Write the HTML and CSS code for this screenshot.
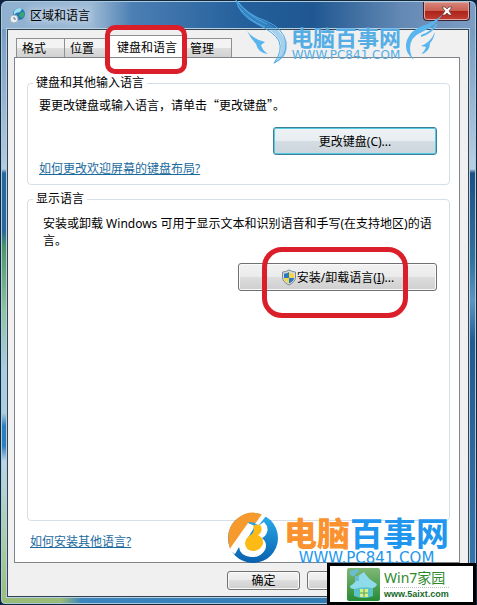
FILE: index.html
```html
<!DOCTYPE html>
<html lang="zh-CN">
<head>
    <meta charset="UTF-8">
    <meta name="viewport" content="width=device-width, initial-scale=1.0">
    <title>区域和语言</title>
    <link rel="stylesheet" href="styles.css">
</head>
<body>
    <div class="window">
        <header class="titlebar">
            <svg class="title-icon" viewBox="0 0 17 17">
                <circle cx="10" cy="7" r="6" fill="#2878b4"/>
                <path d="M7 2q4-2 6 0l-2 3-4 1-2 2q-1-4 2-6z" fill="#9be1ef"/>
                <path d="M11 6l4-1q1 4-2 6l-3-2z" fill="#39a76b"/>
                <circle cx="5" cy="12" r="4" fill="#e9eef2" stroke="#9fb0bd"/>
                <path d="M5 10v2h2" fill="none" stroke="#6c7b88"/>
            </svg>
            <h1>区域和语言</h1>
            <button class="close-btn" type="button" aria-label="关闭">
                <svg viewBox="0 0 12 10" width="12" height="10">
                    <path d="M1 1h3l2 2 2-2h3L8 5l3 4H8L6 7 4 9H1l3-4z" fill="#fff" stroke="#5b3a40" stroke-width=".7"/>
                </svg>
            </button>
        </header>

        <main class="client">
            <div class="tabs" role="tablist">
                <button class="tab" type="button" role="tab">格式</button>
                <button class="tab" type="button" role="tab">位置</button>
                <button class="tab active" type="button" role="tab" aria-selected="true">键盘和语言</button>
                <button class="tab" type="button" role="tab">管理</button>
            </div>

            <div class="panel">
                <fieldset class="group">
                    <legend>键盘和其他输入语言</legend>
                    <p class="hint">要更改键盘或输入语言，请单击“更改键盘”。</p>
                    <button class="btn btn-focus" type="button">更改键盘(C)...</button>
                    <a class="link" href="#">如何更改欢迎屏幕的键盘布局?</a>
                </fieldset>

                <fieldset class="group group-fill">
                    <legend>显示语言</legend>
                    <p class="desc">安装或卸载 Windows 可用于显示文本和识别语音和手写(在支持地区)的语言。</p>
                    <button class="btn btn-wide" type="button">
                        <svg viewBox="0 0 16 17" width="16" height="17">
                            <path d="M8 1q3 2 6.500 2v5q0 5-6.500 8Q1.500 13 1.500 8V3Q5 3 8 1z" fill="#d8dde2" stroke="#7c8994"/>
                            <path d="M8 3v6H3V4.500Q6 4.500 8 3z" fill="#2d78c2"/>
                            <path d="M8 3v6h5V4.500Q10 4.500 8 3z" fill="#f5d64a"/>
                            <path d="M3 9h5v5.500Q3 12 3 9z" fill="#f5d64a"/>
                            <path d="M13 9H8v5.500Q13 12 13 9z" fill="#2d78c2"/>
                        </svg>
                        <span>安装/卸载语言(<u>I</u>)...</span>
                    </button>
                </fieldset>

                <a class="link link-more" href="#">如何安装其他语言?</a>
            </div>

            <footer class="actions">
                <button class="btn btn-small" type="button">确定</button>
                <button class="btn btn-small" type="button" aria-label="取消"></button>
                <button class="btn btn-small" type="button" aria-label="应用"></button>
            </footer>
        </main>
    </div>

    <!-- highlight rings -->
    <div class="ring ring-tab"></div>
    <div class="ring ring-install"></div>

    <!-- site marks -->
    <div class="mark-top">
        <svg viewBox="0 0 54 66" width="54" height="66">
            <path d="M2 0Q6 15 22 23 39 29 46 41q4 12-7 23 17-7 13-22Q47 30 34 23 13 13 2 0z" fill="#4ba9e6" fill-opacity=".45"/>
            <path d="M2 0q11 15 30 21 17 7 20 21 1 15-12 21 9-12 5-22-5-9-22-17Q5 15 2 0M4 6q10 14 27 21M3 1q12 16 30 23" fill="none" stroke="#4ba9e6"/>
            <path d="M13 31q7 9 18 11l-4 3q1 5 7 9-10-1-12-10-5-5-9-13z" fill="#58b5ee"/>
        </svg>
        <div class="mark-text">
            <span class="mark-name">电脑百事网</span>
            <span class="mark-url">WWW.PC841.COM</span>
        </div>
        <svg viewBox="0 0 40 66" width="40" height="66">
            <path d="M39 14Q30 27 18 32 6 37 6 48q0 7 4 12Q-1 52 3 40 7 30 18 26q13-4 21-12z" fill="#58b5ee"/>
            <path d="M33 24q-6 9-16 12" fill="none" stroke="#58b5ee" stroke-width="2"/>
            <path d="M31 32q-4 10-14 14l5 1q-1 4-5 7 9-2 9-11 4-4 5-11z" fill="#58b5ee"/>
        </svg>
    </div>

    <div class="mark-bottom">
        <svg viewBox="0 0 52 52" width="52" height="52">
            <defs>
                <linearGradient id="blue" x1="0" y1="0" x2="0" y2="1">
                    <stop offset="0" stop-color="#2bb0ee"/>
                    <stop offset="1" stop-color="#0760ae"/>
                </linearGradient>
            </defs>
            <circle cx="26" cy="26" r="25" fill="url(#blue)"/>
            <path d="M3 37Q-3 16 11 6 23-3 36 3l-7 8-7-1L5 38z" fill="#f79a2d"/>
            <path d="M35 2l4 2-7 9-4-1z" fill="#fff"/>
            <path d="M21 11l7 3-9 15q5-5 9-5 6-2 5-7l-2-3 6-4q5 5 3 10-1 4-5 6 6 5 3 12-5 8-14 7-11-1-12-10L8 42l-6-4z" fill="#fff"/>
            <path d="M26 14q5-3 8 0 2 6-3 9 6 3 5 9-3 7-10 7-8-1-8-8 1-6 7-9 3-3 1-8z" fill="#fbbb14"/>
        </svg>
        <div class="mark-text">
            <span class="mark-name"><b>电脑</b>百事网</span>
            <span class="mark-url">WWW.PC841.COM</span>
        </div>
    </div>

    <div class="badge">
        <svg viewBox="0 0 33 33" width="33" height="33">
            <defs>
                <linearGradient id="green" x1="0" y1="0" x2="0" y2="1">
                    <stop offset="0" stop-color="#80b877"/>
                    <stop offset="1" stop-color="#278a35"/>
                </linearGradient>
            </defs>
            <rect width="33" height="33" rx="2" fill="url(#green)"/>
            <path d="M7 19h19v9q-9 4-19 0z" fill="#58c4c7"/>
            <path d="M17 4q4 7 13 12-1 4-5 4-9-2-18 1-4 0-4-3Q9 15 11 8z" fill="#8edbea"/>
            <circle cx="6" cy="5" r="3" fill="#68bfd3"/>
            <circle cx="10" cy="3" r="2" fill="#68bfd3"/>
            <path d="M8 8h4v5H8z" fill="#68bfd3"/>
            <path d="M13 21h8v8h-8z" fill="#d8ef8c"/>
            <path d="M17 21v8M13 25h8" stroke="#4da565"/>
        </svg>
        <div class="badge-text">
            <span class="badge-name">Win7家园</span>
            <span class="badge-url">www.5aixt.com</span>
        </div>
    </div>
</body>
</html>
```
FILE: styles.css
```css
* {
    box-sizing: border-box;
}

body {
    margin: 0;
    position: relative;
    overflow: hidden;
    background-color: #0b2340;
    color: #000;
    font-family: "Noto Sans", "Noto Sans CJK SC", sans-serif;
    font-size: 12px;
    line-height: 17px;
}

button {
    font-family: inherit;
    font-size: 12px;
    line-height: 17px;
    color: #000;
    padding: 0;
}

/* window frame */
.window {
    display: flex;
    flex-direction: column;
    min-height: 100vh;
    padding: 0 7px 7px 6px;
    border: 1px solid #14283c;
    border-radius: 7px 7px 5px 5px;
    box-shadow: inset 0 0 0 1px #a9c9df;
    background:
        linear-gradient(#6c94bf 0, #b4cbe0 168px, #2468a0 172px, #2868a0 230px, #4a9468 245px, #8fc4a0 310px, #a9cce6 370px, #a9cfe0 412px, #2f7ebd 425px, #2f7ebd 445px, #b9d6e8 460px, #a8cda4 540px, #9abb78 100%) left / 9px 100% no-repeat,
        linear-gradient(#6990bb 0, #b9cfe3 168px, #1d4f84 172px, #34719f 260px, #5c96c4 300px, #245b90 340px, #3b78ae 100%) right / 9px 100% no-repeat,
        linear-gradient(90deg, #9abb78 60px, #3d86bd 80px, #2f74ac);
}

.titlebar {
    display: flex;
    align-items: center;
    height: 28px;
    margin: 0 -6px 0 -5px;
    padding: 0 5px 0 7px;
    border-top: 1px solid #a9c9df;
    border-radius: 6px 6px 0 0;
    background: linear-gradient(90deg, #8fb0d0 0, #9cb9d5 90px, #4c7fb3 130px, #24609c 240px, #1f5791 310px, #6489b4 400px, #7d9dc3 100%);
}

.title-icon {
    width: 17px;
    height: 17px;
    margin-right: 4px;
}

.titlebar h1 {
    flex: 1;
    margin: 0;
    font-size: 12px;
    font-weight: normal;
    text-shadow: 0 0 6px #dbe8f4, 0 0 9px #dbe8f4;
}

.close-btn {
    display: flex;
    align-items: center;
    justify-content: center;
    align-self: flex-start;
    width: 47px;
    height: 19px;
    border: 1px solid #3c2230;
    border-top: 0;
    border-radius: 0 0 4px 4px;
    box-shadow: inset 0 0 0 1px #dda9a5;
    background: linear-gradient(#d9867c 0, #c96052 48%, #ad2119 50%, #c23f34 100%);
}

.client {
    display: flex;
    flex-direction: column;
    flex: 1;
    padding: 5px 8px 6px 6px;
    border: 1px solid #34434f;
    outline: 1px solid #b5d0e3;
    background-color: #f0f0f0;
}

/* tabs */
.tabs {
    display: flex;
    align-items: flex-end;
    height: 22px;
    padding-left: 2px;
}

.tab {
    width: 48px;
    height: 19px;
    padding-left: 5px;
    border: 1px solid #8e8f8f;
    border-right: 0;
    border-bottom: 0;
    background: linear-gradient(#f3f3f3 50%, #dedede 50%, #d2d2d2);
    text-align: left;
}

.tab:last-child {
    border-right: 1px solid #8e8f8f;
}

.tab.active {
    width: 75px;
    height: 23px;
    padding: 0;
    margin: 0 0 -1px -3px;
    background: #fff;
    text-align: center;
}

.panel {
    display: flex;
    flex-direction: column;
    flex: 1;
    padding: 17px 9px 12px 12px;
    border: 1px solid #7f8489;
    background-color: #fff;
}

.group {
    min-width: 0;
    margin: 0 0 6px;
    padding: 5px 12px 7px 11px;
    border: 1px solid #d5dfe5;
    border-radius: 4px;
}

.group-fill {
    flex: 1;
    margin-bottom: 12px;
}

.group legend {
    height: 16px;
    margin-left: -6px;
    padding: 0 3px;
    line-height: 16px;
}

.group p {
    margin: 0 0 14px;
}

/* full-width quotes */
.group .hint {
    font-family: "Noto Sans CJK SC", sans-serif;
}

.group .desc {
    margin-top: 3px;
    margin-right: -6px;
    padding-left: 4px;
}

.link {
    display: block;
    color: #1a6a9e;
    text-decoration: underline;
}

.link-more {
    margin-left: 3px;
}

.btn {
    display: flex;
    align-items: center;
    justify-content: center;
    height: 28px;
    border: 1px solid #707070;
    border-radius: 3px;
    box-shadow: inset 0 0 0 1px #fafafa;
    background: linear-gradient(#f2f2f2 0, #ebebeb 50%, #dddddd 50%, #cfcfcf 100%);
}

.btn-focus {
    width: 164px;
    margin: 0 0 5px auto;
    border-color: #3c7f96;
    box-shadow: inset 0 0 0 1px #55cbe4;
    background: linear-gradient(#eff3f6 0, #e6ecf0 50%, #d5dde3 50%, #cbd5dc 100%);
}

.btn-wide {
    width: 199px;
    margin-left: auto;
}

.actions {
    display: flex;
    justify-content: flex-end;
    gap: 7px;
    padding-top: 8px;
}

.btn-small {
    width: 73px;
    height: 19px;
}

/* red highlight rings */
.ring {
    position: absolute;
    border: 5px solid #db1f2a;
    pointer-events: none;
}

.ring-tab {
    left: 105px;
    top: 25px;
    width: 82px;
    height: 49px;
    border-radius: 10px;
}

.ring-install {
    left: 262px;
    top: 247px;
    width: 146px;
    height: 71px;
    border-radius: 20px;
}

/* site marks */
.mark-top,
.mark-bottom {
    position: absolute;
    display: flex;
    pointer-events: none;
}

.mark-top {
    top: 0;
    right: 33px;
    color: #55ade6;
}

.mark-bottom {
    right: 28px;
    top: 512px;
    color: #2196ee;
}

.mark-text {
    display: flex;
    flex-direction: column;
    align-items: center;
}

.mark-name {
    font-family: "Noto Sans CJK SC", sans-serif;
    font-weight: bold;
}

.mark-url {
    font-family: "DejaVu Sans", sans-serif;
}

.mark-top .mark-text {
    width: 116px;
    padding-top: 24px;
}

.mark-top .mark-name {
    font-size: 22px;
    line-height: 25px;
}

.mark-top .mark-url {
    font-size: 12px;
    line-height: 13px;
}

.mark-bottom .mark-text {
    margin-left: 5px;
    padding-top: 2px;
}

.mark-bottom .mark-name {
    font-size: 33px;
    line-height: 36px;
}

.mark-bottom b {
    color: #f9922f;
}

.mark-bottom .mark-url {
    font-size: 15px;
    line-height: 17px;
}

.badge {
    position: absolute;
    right: 1px;
    top: 563px;
    display: flex;
    gap: 4px;
    width: 149px;
    height: 42px;
    padding: 2px 0 0 17px;
    border: 3px solid #000;
    background-color: #fff;
}

.badge-text {
    display: flex;
    flex-direction: column;
}

.badge-name {
    border-bottom: 1px dotted #b9bdb9;
    color: #2d8a2b;
    font-size: 14px;
    line-height: 19px;
}

.badge-url {
    color: #17692a;
    font-family: "Liberation Sans", sans-serif;
    font-size: 9px;
    font-weight: bold;
    line-height: 13px;
}
```
